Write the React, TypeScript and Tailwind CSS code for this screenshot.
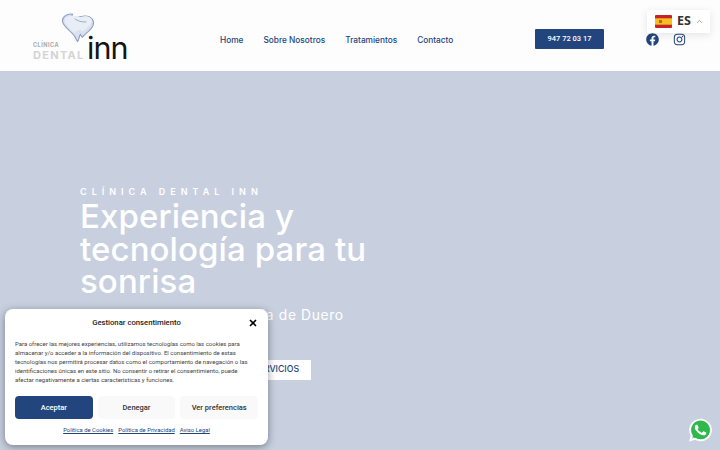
import React from "react";
import { FaFacebook, FaInstagram, FaWhatsapp } from "react-icons/fa";
import { X, ChevronUp } from "lucide-react";

const inter = "[font-family:Inter,'Liberation_Sans',sans-serif]";

function Logo() {
  return (
    <div className="relative w-[97px] h-[48px] ml-[32px] mt-[13px] shrink-0">
      <svg viewBox="0 0 36 42" preserveAspectRatio="none" className="absolute left-[28.500px] top-0 w-[35px] h-[30px]">
        <path d="M12 1.500C6 .5 1.500 5 1.500 11c0 6 5 11 9 16 2.500 3 5 8 6.500 13 1.500-1 1-6 3-10 1 2 1.500 4 2 4 3-6 9-9 11-17 1.500-7-2-13-8-13-4 0-6 2-8 2-2.500 0-3-1.500-6-1.500z" fill="#dbe2ef" stroke="#8d9fc4" strokeWidth="1.200" />
        <path d="M4 11c0-4 3-7 8-7 3 0 4 1 6 1.500 3 .5 5-1.500 8-1 3 .5 6 3 5.500 7.500-.5 5-5 9-9 14-2-2-3-3-5-2-3 1-4 4-4 4-3-4-9.500-11-9.500-17z" fill="#e9edf5" />
        <path d="M14 8c3 3 7 5 12 4.500" fill="none" stroke="#8d9fc4" strokeWidth="1" />
      </svg>
      <div className={`absolute left-[1px] top-[29px] ${inter} text-[5.500px] leading-[7px] font-bold tracking-[0.5px] text-[#a9a9a9]`}>CLÍNICA</div>
      <div className={`absolute left-[1px] top-[36px] ${inter} text-[11px] leading-[12px] font-bold tracking-[1.300px] text-[#d4d4d4]`}>DENTAL</div>
      <div className={`absolute left-[55px] top-[17px] ${inter} text-[30.500px] leading-[36px] font-normal tracking-[-1px] text-[#141414]`}>inn</div>
    </div>
  );
}

export default function App() {
  return (
    <div className={`relative w-[720px] h-[450px] overflow-hidden bg-[#c8d0e0] ${inter}`}>
      <header className="h-[71px] bg-[#fdfdfe] flex items-start">
        <Logo />
        <nav className="flex gap-[20px] w-[237px] ml-[91px] mt-[34px] text-[#23457e] text-[8.300px] leading-[12px] font-medium">
          <span>Home</span>
          <span>Sobre Nosotros</span>
          <span>Tratamientos</span>
          <span>Contacto</span>
        </nav>
        <div className="ml-[78px] mt-[29px] w-[69px] h-[20px] bg-[#23457e] rounded-[1px] flex items-center justify-center text-white text-[7.500px] font-medium [font-family:Roboto,sans-serif]">
          947 72 03 17
        </div>
        <div className="flex items-center gap-[14px] ml-[42px] mt-[33px] text-[#23457e]">
          <FaFacebook className="w-[13px] h-[13px]" />
          <FaInstagram className="w-[13px] h-[13px]" />
        </div>
      </header>

      <div className="absolute left-[647px] top-[10px] w-[63px] h-[23px] bg-white shadow-[0_2px_8px_rgba(0,0,0,0.1)] flex items-center pl-[8px]">
        <svg viewBox="0 0 17 13" className="w-[17px] h-[13px]">
          <rect width="17" height="13" rx="1" fill="#c8202c" />
          <rect y="3.300" width="17" height="6.400" fill="#f5bf1c" />
          <rect x="4" y="5" width="3" height="3" fill="#b5651d" />
        </svg>
        <span className="ml-[5px] text-[12.500px] font-bold text-[#333] [font-family:'Noto_Sans',sans-serif]">ES</span>
        <ChevronUp className="ml-[4px] w-[9px] h-[9px] text-[#888]" />
      </div>

      <main className="pl-[80px] pt-[115px] text-white">
        <div className="text-[9px] leading-[12px] font-semibold tracking-[5px]">CLÍNICA DENTAL INN</div>
        <h1 className="mt-[2px] w-[310px] text-[33px] leading-[32.500px] font-medium tracking-[0.1px]">
          Experiencia y tecnología para tu sonrisa
        </h1>
        <p className="mt-[8px] text-[13.800px] leading-[18px] tracking-[0.65px] whitespace-nowrap">Tu clínica dental en Aranda de Duero</p>
        <div className="mt-[36px] flex gap-[10px] text-[8.700px] font-medium text-[#23457e]">
          <div className="w-[100px] h-[20px] bg-[#23457e] text-white flex items-center justify-center">PEDIR CITA</div>
          <div className="w-[121px] h-[20px] pr-[12px] bg-white flex items-center justify-end">NUESTROS SERVICIOS</div>
        </div>
      </main>

      <div className="absolute left-[5px] top-[309px] w-[263px] h-[136px] bg-white rounded-[8px] shadow-[0_2px_8px_rgba(0,0,0,0.4)] px-[10px] [font-family:Roboto,sans-serif]">
        <div className="relative h-[28px] flex items-center justify-center text-[7.700px] font-medium text-[#222]">
          Gestionar consentimiento
          <X className="absolute right-0 top-[9px] w-[10px] h-[10px] text-black" strokeWidth={4} />
        </div>
        <p className="mt-[2px] w-[236px] text-[6px] leading-[9px] text-[#444]">
          Para ofrecer las mejores experiencias, utilizamos tecnologías como las cookies para almacenar y/o acceder a la información del dispositivo. El consentimiento de estas tecnologías nos permitirá procesar datos como el comportamiento de navegación o las identificaciones únicas en este sitio. No consentir o retirar el consentimiento, puede afectar negativamente a ciertas características y funciones.
        </p>
        <div className="mt-[12px] flex gap-[5px] text-[7.500px] font-medium">
          <div className="w-[78px] h-[23px] rounded-[4px] bg-[#23457e] text-white flex items-center justify-center">Aceptar</div>
          <div className="w-[78px] h-[23px] rounded-[4px] bg-[#f9f9f9] text-[#333] flex items-center justify-center">Denegar</div>
          <div className="w-[78px] h-[23px] rounded-[4px] bg-[#f9f9f9] text-[#333] flex items-center justify-center">Ver preferencias</div>
        </div>
        <div className="mt-[7px] flex justify-center gap-[5px] text-[5.900px] leading-[9px] text-[#23457e] underline">
          <span>Política de Cookies</span>
          <span>Política de Privacidad</span>
          <span>Aviso Legal</span>
        </div>
      </div>

      <div className="absolute left-[688px] top-[417px] w-[25px] h-[26px] flex items-center justify-center">
        <div className="absolute left-[2px] top-[2px] w-[21px] h-[21px] rounded-full bg-[#2fb84c]" />
        <FaWhatsapp className="absolute inset-0 w-[25px] h-[26px] text-white" />
      </div>
    </div>
  );
}
